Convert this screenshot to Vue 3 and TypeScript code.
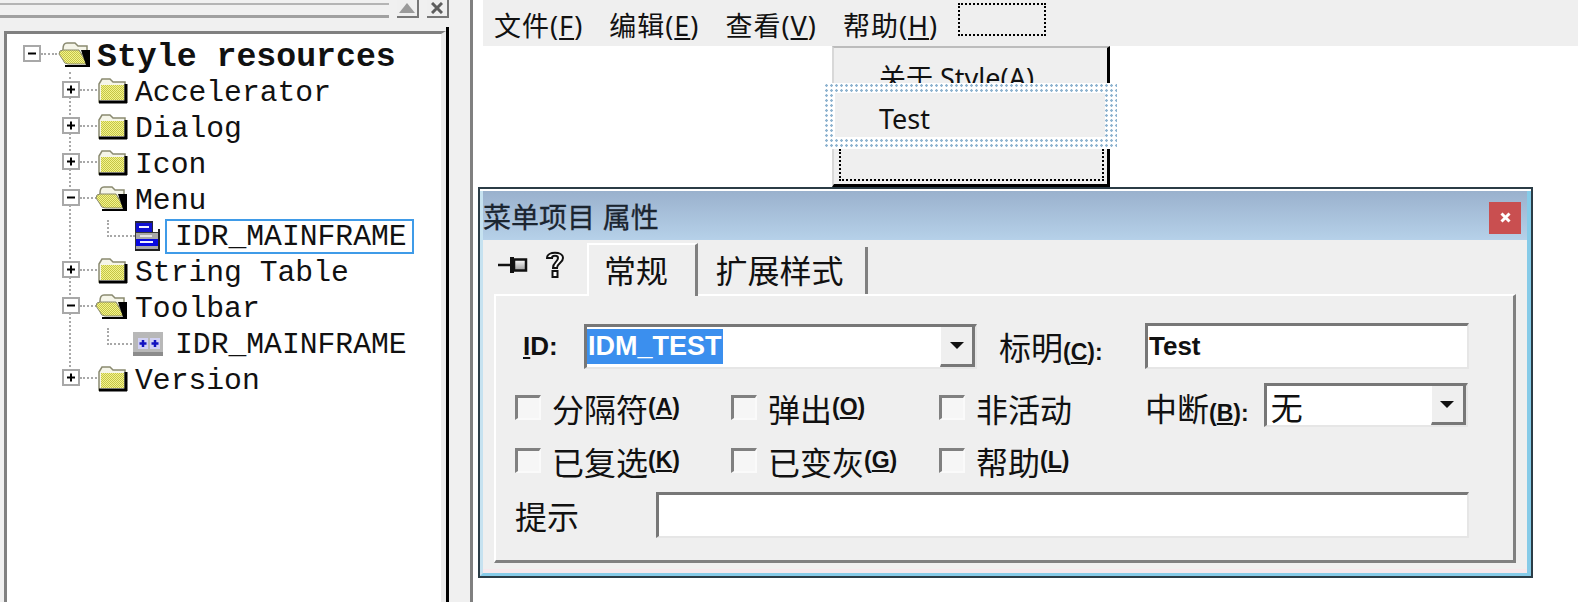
<script setup lang="ts">
interface TreeRow {
  label: string
  level: 0 | 1 | 2
  icon: 'open' | 'closed' | 'menu' | 'toolbar'
  selected?: boolean
}

interface Option {
  text: string
  key?: string
}

const treeRows: TreeRow[] = [
  { label: 'Style resources', level: 0, icon: 'open' },
  { label: 'Accelerator', level: 1, icon: 'closed' },
  { label: 'Dialog', level: 1, icon: 'closed' },
  { label: 'Icon', level: 1, icon: 'closed' },
  { label: 'Menu', level: 1, icon: 'open' },
  { label: 'IDR_MAINFRAME', level: 2, icon: 'menu', selected: true },
  { label: 'String Table', level: 1, icon: 'closed' },
  { label: 'Toolbar', level: 1, icon: 'open' },
  { label: 'IDR_MAINFRAME', level: 2, icon: 'toolbar' },
  { label: 'Version', level: 1, icon: 'closed' }
]

const menus = [
  { text: '文件', key: 'F' },
  { text: '编辑', key: 'E' },
  { text: '查看', key: 'V' },
  { text: '帮助', key: 'H' }
]

const topOptions: Option[] = [
  { text: '分隔符', key: 'A' },
  { text: '弹出', key: 'O' },
  { text: '非活动' }
]

const bottomOptions: Option[] = [
  { text: '已复选', key: 'K' },
  { text: '已变灰', key: 'G' },
  { text: '帮助', key: 'L' }
]
</script>

<template>
  <div class="screen">
    <svg class="defs" width="0" height="0" aria-hidden="true">
      <defs>
        <pattern id="dither" width="2" height="2" patternUnits="userSpaceOnUse">
          <rect width="2" height="2" fill="#f4f48c" />
          <rect width="1" height="1" fill="#c4c448" />
          <rect x="1" y="1" width="1" height="1" fill="#c4c448" />
        </pattern>
      </defs>
    </svg>

    <aside class="side">
      <div class="side-head">
        <div class="gripper"></div>
        <button class="mini-btn">
          <svg width="16" height="10" viewBox="0 0 16 10"><path d="M8 0 16 10H0z" fill="#9a9a9a" /></svg>
        </button>
        <button class="mini-btn">
          <svg width="12" height="12" viewBox="0 0 12 12"><path d="M1 1 11 11M11 1 1 11" stroke="#5e5e5e" stroke-width="3" /></svg>
        </button>
      </div>

      <div class="tree">
        <div class="tree-trunk"></div>
        <div v-for="(row, i) in treeRows" :key="i" class="tree-row" :class="`level-${row.level}`">
          <svg v-if="row.level < 2" class="expander" width="18" height="17" viewBox="0 0 18 17">
            <rect x="1" y="1" width="16" height="15" fill="#fff" stroke="#a8a8a8" stroke-width="2" />
            <path d="M5 8.5H13" stroke="#000" stroke-width="2" />
            <path v-if="row.icon === 'closed'" d="M9 4.500V12.500" stroke="#000" stroke-width="2" />
          </svg>
          <span v-if="row.level < 2" class="link"></span>
          <span v-else class="elbow"></span>

          <svg v-if="row.icon === 'closed'" class="icon" width="30" height="26" viewBox="0 0 30 26">
            <path d="M1 6 4 1H12L15 4H27V24H1z" fill="#f5f5e8" stroke="#8a8a70" stroke-width="1.500" />
            <rect x="3" y="7" width="23" height="15" fill="url(#dither)" />
            <path d="M1 24H29M28 6V25" stroke="#000" stroke-width="3" />
          </svg>
          <svg v-else-if="row.icon === 'open'" class="icon open" width="32" height="26" viewBox="0 0 32 26">
            <path d="M5 7Q5 1 9 1H17L20 4H29V12H5z" fill="#f5f5e8" stroke="#8a8a70" stroke-width="1.500" />
            <path d="M1 12Q1 8 5 8H21L29 22H10Q6 22 5 18z" fill="url(#dither)" stroke="#8a8a70" stroke-width="1" />
            <path d="M23 8H32V25H7V23H28z" fill="#000" />
          </svg>
          <svg v-else-if="row.icon === 'menu'" class="icon" width="25" height="30" viewBox="0 0 25 30">
            <rect x="0" y="0" width="18" height="12" fill="#28283c" />
            <rect x="0" y="11" width="23" height="17" fill="#383838" />
            <rect x="23" y="8" width="2" height="22" fill="#202020" />
            <rect x="1" y="2" width="16" height="9" fill="#1010d0" />
            <rect x="4" y="5" width="10" height="2" fill="#f0f0ff" />
            <rect x="1" y="12" width="22" height="6" fill="#a8a8a8" />
            <rect x="5" y="14" width="12" height="2" fill="#e4e4e4" />
            <rect x="1" y="18" width="22" height="7" fill="#0808e0" />
            <rect x="5" y="20" width="13" height="2" fill="#f0f0ff" />
            <rect x="1" y="25" width="22" height="3" fill="#a8a8a8" />
            <rect x="0" y="28" width="25" height="2" fill="#202020" />
          </svg>
          <svg v-else class="icon icon-toolbar" width="30" height="24" viewBox="0 0 30 24">
            <rect width="30" height="24" fill="#b8b8b8" />
            <rect y="20" width="30" height="4" fill="#8c8c8c" />
            <rect x="5" y="6" width="10" height="11" fill="#d0d0f4" />
            <rect x="17" y="6" width="10" height="11" fill="#d0d0f4" />
            <path d="M10 8V15M6.500 11.500H13.500M22 8V15M18.500 11.500H25.500" stroke="#1010c0" stroke-width="2.500" />
          </svg>

          <span class="tree-label" :class="{ selected: row.selected }">{{ row.label }}</span>
        </div>
      </div>
    </aside>

    <main class="workspace">
      <nav class="menubar">
        <span v-for="m in menus" :key="m.key" class="menu-item">{{ m.text }}(<u>{{ m.key }}</u>)</span>
        <span class="menu-new"></span>
      </nav>

      <div class="popup">
        <div class="popup-about">关于 Style(A)</div>
        <div class="popup-hatch"><div class="popup-current">Test</div></div>
        <div class="popup-new"></div>
      </div>

      <section class="dialog">
        <div class="dialog-frame">
          <header class="titlebar">
            <span class="title">菜单项目 属性</span>
            <span class="close">
              <svg width="11" height="11" viewBox="0 0 11 11"><path d="M1.500 1.500 9.500 9.500M9.500 1.500 1.500 9.500" stroke="#fff" stroke-width="3" /></svg>
            </span>
          </header>

          <div class="dialog-body">
            <div class="tabstrip">
              <svg class="pin" width="30" height="16" viewBox="0 0 30 16">
                <defs>
                  <linearGradient id="pin-body" x1="0" y1="0" x2="0" y2="1">
                    <stop offset="0" stop-color="#fff" />
                    <stop offset="1" stop-color="#999" />
                  </linearGradient>
                </defs>
                <path d="M0 8H13" stroke="#111" stroke-width="2.500" />
                <rect x="12" y="0" width="4" height="16" fill="#111" />
                <rect x="16" y="2.500" width="12" height="11" fill="url(#pin-body)" stroke="#111" stroke-width="2.500" />
              </svg>
              <svg class="help" width="20" height="29" viewBox="0 0 20 29">
                <path d="M2 8C2 1 18 1 18 8 18 13 12 13 12 18H8C8 12 13 12 13 8 13 5 7 5 7 8z" fill="#fff" stroke="#111" stroke-width="2" />
                <rect x="7.500" y="21" width="5" height="6" fill="#fff" stroke="#111" stroke-width="2" />
              </svg>
              <span class="tab active">常规</span>
              <span class="tab">扩展样式</span>
            </div>

            <div class="panel">
              <div class="row-id">
                <span class="label-id bold"><u>I</u>D:</span>
                <span class="field combo combo-id">
                  <span class="selected-text">IDM_TEST</span>
                  <span class="combo-btn"><i class="arrow"></i></span>
                </span>
                <span class="label-caption">标明<b class="mn">(<u>C</u>):</b></span>
                <span class="field edit-caption"><span class="bold">Test</span></span>
              </div>

              <div class="options">
                <label v-for="o in topOptions" :key="o.text" class="option">
                  <i class="check"></i><span>{{ o.text }}</span><b v-if="o.key" class="mn">(<u>{{ o.key }}</u>)</b>
                </label>
                <div class="break-row">
                  <span class="break-label">中断<b class="mn">(<u>B</u>):</b></span>
                  <span class="field combo combo-break">
                    <span class="combo-value">无</span>
                    <span class="combo-btn"><i class="arrow"></i></span>
                  </span>
                </div>
                <label v-for="o in bottomOptions" :key="o.text" class="option">
                  <i class="check"></i><span>{{ o.text }}</span><b v-if="o.key" class="mn">(<u>{{ o.key }}</u>)</b>
                </label>
              </div>

              <div class="row-hint">
                <span class="label-hint">提示</span>
                <span class="field edit-hint"></span>
              </div>
            </div>
          </div>
        </div>
      </section>
    </main>
  </div>
</template>

<style>
html,
body {
  margin: 0;
  background: #fff;
  overflow: hidden;
}
</style>

<style scoped>
.screen {
  position: relative;
  display: flex;
  width: 1578px;
  height: 602px;
  overflow: hidden;
  background: #fff;
  color: #111;
  font-family: "Liberation Sans", "Noto Sans CJK SC", sans-serif;
}

.defs {
  position: absolute;
}

/* left docked resource view */
.side {
  display: flex;
  flex-direction: column;
  width: 470px;
  flex: none;
  box-sizing: content-box;
  background: #f0f0f0;
  border-right: 3px solid #808080;
}

.side-head {
  display: flex;
  align-items: flex-start;
  height: 31px;
  flex: none;
  padding-right: 21px;
}

.gripper {
  width: 390px;
  height: 10px;
  margin-top: 3px;
  border-top: 2px solid #b4b4b4;
  border-bottom: 3px solid #a0a0a0;
}

.mini-btn {
  display: flex;
  align-items: center;
  justify-content: center;
  width: 22px;
  height: 18px;
  margin-left: 8px;
  padding: 0;
  background: #efefef;
  border: 0;
  border-right: 2px solid #777;
  border-bottom: 2px solid #777;
}

.tree {
  position: relative;
  flex: 1;
  width: 434px;
  margin-left: 4px;
  padding: 4px 0 0;
  background: #fff;
  border-top: 3px solid #808080;
  border-left: 3px solid #808080;
  border-right: 5px solid #ececec;
}

.tree::after {
  content: "";
  position: absolute;
  top: -7px;
  bottom: 0;
  right: -8px;
  width: 3px;
  background: #000;
}

.tree-trunk {
  position: absolute;
  left: 62px;
  top: 38px;
  height: 295px;
  border-left: 2px dotted #a8a8a8;
}

.tree-row {
  position: relative;
  display: flex;
  align-items: center;
  height: 36px;
  font-family: "Liberation Mono", "DejaVu Sans Mono", monospace;
  font-size: 29.700px;
}

.level-0 {
  padding-left: 16px;
  font-size: 33.200px;
  font-weight: 700;
}

.level-1 {
  padding-left: 55px;
}

.level-2 {
  padding-left: 100px;
}

.expander {
  flex: none;
  margin-top: -6px;
}

.link {
  flex: none;
  width: 17px;
  margin-top: -4px;
  margin-right: 1px;
  border-top: 2px dotted #a8a8a8;
}

.level-0 .link {
  width: 16px;
}

.elbow {
  flex: none;
  width: 26px;
  height: 15px;
  margin-top: -16px;
  border-left: 2px dotted #a8a8a8;
  border-bottom: 2px dotted #a8a8a8;
}

.icon {
  flex: none;
  margin-top: -3px;
  margin-right: 7px;
}

.level-1 .icon.open {
  margin-left: -3px;
  margin-right: 8px;
}

.level-2 .icon {
  margin-top: 0;
  margin-right: 5px;
}

.level-2 .icon-toolbar {
  margin-left: -2px;
  margin-right: 2px;
}

.tree-label {
  padding-top: 2px;
}

.level-2 .tree-label {
  display: flex;
  align-items: center;
  box-sizing: border-box;
  width: 249px;
  height: 35px;
  padding-left: 8px;
  border: 2px solid transparent;
}

.tree-label.selected {
  border-color: #3f9be8;
}

/* workspace */
.workspace {
  position: relative;
  flex: 1;
  min-width: 0;
}

.menubar {
  display: flex;
  align-items: center;
  gap: 26px;
  height: 46px;
  margin-left: 10px;
  padding-left: 11px;
  background: #efefef;
  font-family: "Noto Sans", "Noto Sans CJK SC", sans-serif;
  font-size: 27px;
}

.menu-item {
  padding-top: 6px;
  letter-spacing: 1px;
  white-space: nowrap;
  line-height: 38px;
}

.menu-new {
  width: 84px;
  height: 29px;
  margin-left: -6px;
  margin-top: -8px;
  border: 2px dotted #000;
}

/* menu being edited, floats over the canvas */
.popup {
  position: absolute;
  left: 359px;
  top: 46px;
  width: 278px;
  height: 141px;
  box-sizing: border-box;
  background: #efefef;
  border-top: 2px solid #bcbcbc;
  border-left: 2px solid #d8d8d8;
  border-right: 3px solid #000;
  border-bottom: 3px solid #000;
  font-family: "Noto Sans", "Noto Sans CJK SC", sans-serif;
  font-size: 27px;
}

.popup-about {
  height: 35px;
  padding-left: 45px;
  overflow: hidden;
  line-height: 60px;
  white-space: nowrap;
}

.popup-hatch {
  box-sizing: border-box;
  height: 66px;
  margin: 0 -10px 0 -10px;
  padding: 10px 12px 12px 11px;
  background-color: #fff;
  background-image: radial-gradient(circle, #8fb4d0 1.100px, transparent 1.500px);
  background-size: 5px 5px;
}

.popup-current {
  height: 44px;
  padding-left: 44px;
  background: #efefef;
  line-height: 52px;
}

.popup-new {
  box-sizing: border-box;
  height: 32px;
  margin: 0 3px 0 5px;
  border: 2px dotted #000;
  border-top: 0;
}

/* property dialog */
.dialog {
  position: absolute;
  left: 5px;
  top: 187px;
  width: 1055px;
  height: 391px;
  box-sizing: border-box;
  background: #fff;
  border: 2px solid #2b3c46;
  padding-top: 2px;
  font-size: 32px;
}

.dialog-frame {
  display: flex;
  flex-direction: column;
  height: 100%;
  box-sizing: border-box;
  border-left: 3px solid #c6e2f0;
  border-right: 4px solid #86cbe8;
  border-bottom: 3px solid #86cbe8;
}

.titlebar {
  display: flex;
  align-items: center;
  justify-content: space-between;
  height: 49px;
  flex: none;
  padding-right: 6px;
  background: linear-gradient(#9ab1cd, #b6d1e9);
}

.title {
  padding-top: 7px;
  font-size: 28px;
  line-height: 38px;
  color: #1b2530;
  -webkit-text-stroke: 0.300px #1b2530;
}

.close {
  display: flex;
  align-items: center;
  justify-content: center;
  width: 32px;
  height: 32px;
  margin-top: 4px;
  background: #c94f50;
}

.dialog-body {
  display: flex;
  flex-direction: column;
  flex: 1;
  min-height: 0;
  padding: 0 11px 10px 11px;
  background: #efefef;
  box-shadow: inset 0 -4px 0 #f6e8ec;
}

.tabstrip {
  display: flex;
  align-items: flex-end;
  height: 54px;
  flex: none;
}

.pin {
  align-self: flex-start;
  margin: 17px 0 0 4px;
}

.help {
  align-self: flex-start;
  margin: 10px 0 0 17px;
}

.tab {
  display: flex;
  align-items: center;
  justify-content: center;
  box-sizing: border-box;
  height: 47px;
  width: 168px;
  margin-left: 2px;
  border-right: 3px solid #808080;
  padding: 0 6px 4px 0;
  font-family: "Noto Sans CJK SC", sans-serif;
}

.tab.active {
  position: relative;
  z-index: 1;
  width: 111px;
  height: 53px;
  margin-left: 22px;
  margin-bottom: -2px;
  padding-right: 12px;
  border-top: 2px solid #fff;
  border-left: 2px solid #fff;
  background: #efefef;
}

.panel {
  flex: 1;
  box-sizing: border-box;
  padding: 27px 0 0 19px;
  border-top: 2px solid #fff;
  border-left: 2px solid #fff;
  border-right: 3px solid #808080;
  border-bottom: 3px solid #808080;
  font-family: "Noto Sans CJK SC", sans-serif;
}

.field {
  box-sizing: border-box;
  display: flex;
  align-items: center;
  background: #fff;
  border-top: 3px solid #777;
  border-left: 3px solid #777;
  border-right: 2px solid #e6e6e6;
  border-bottom: 2px solid #e6e6e6;
}

.bold {
  font-family: "Liberation Sans", sans-serif;
  font-size: 26px;
  font-weight: 700;
}

.mn {
  font-family: "Liberation Sans", sans-serif;
  font-size: 23px;
  font-weight: 700;
}

.row-id {
  display: flex;
  align-items: center;
  height: 46px;
}

.label-id {
  width: 61px;
  margin-left: 8px;
  flex: none;
}

.combo-id {
  width: 393px;
  height: 45px;
  flex: none;
}

.selected-text {
  padding: 0 1px;
  height: 35px;
  background: #3b8fee;
  color: #fff;
  font-family: "Liberation Sans", sans-serif;
  font-size: 27px;
  font-weight: 700;
  line-height: 35px;
}

.combo-btn {
  display: flex;
  align-items: center;
  justify-content: center;
  box-sizing: border-box;
  width: 35px;
  height: 100%;
  margin-left: auto;
  background: #efefef;
  border-left: 1px solid #fff;
  border-right: 3px solid #777;
  border-bottom: 3px solid #777;
}

.arrow {
  width: 0;
  height: 0;
  border-left: 7px solid transparent;
  border-right: 7px solid transparent;
  border-top: 7px solid #111;
}

.label-caption {
  width: 146px;
  margin-left: 22px;
  flex: none;
  white-space: nowrap;
}

.edit-caption {
  width: 324px;
  height: 46px;
  flex: none;
  padding-left: 1px;
}

.options {
  display: grid;
  grid-template-columns: 216px 208px 206px 1fr;
  grid-template-rows: 44px 44px;
  row-gap: 9px;
  margin-top: 14px;
}

.option {
  display: flex;
  align-items: center;
  padding-top: 5px;
  white-space: nowrap;
}

.check {
  box-sizing: border-box;
  width: 26px;
  height: 25px;
  flex: none;
  margin-right: 11px;
  background: #f6f6f6;
  border-top: 3px solid #808080;
  border-left: 3px solid #808080;
  border-right: 2px solid #fafafa;
  border-bottom: 2px solid #fafafa;
}

.break-row {
  display: flex;
  align-items: center;
  gap: 15px;
  white-space: nowrap;
}

.break-label {
  padding-top: 4px;
}

.combo-break {
  width: 204px;
  height: 44px;
  flex: none;
}

.combo-value {
  padding-left: 4px;
  line-height: 1;
}

.row-hint {
  display: flex;
  align-items: center;
  margin-top: 12px;
}

.label-hint {
  width: 141px;
  flex: none;
}

.edit-hint {
  width: 813px;
  height: 46px;
}
</style>
